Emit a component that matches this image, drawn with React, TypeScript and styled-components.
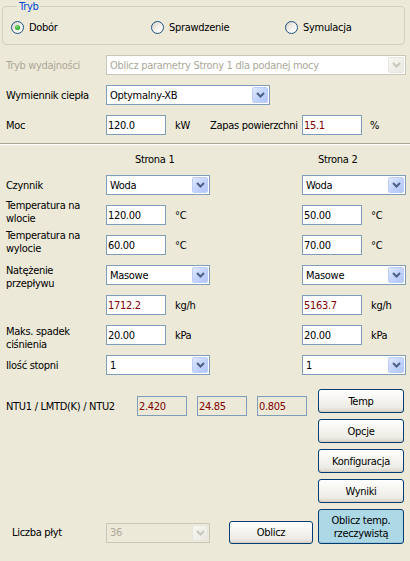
import React from "react";
import styled, { createGlobalStyle } from "styled-components";

const GlobalStyle = createGlobalStyle`
  html, body {
    margin: 0;
    padding: 0;
    background: #ece9d8;
  }
  body {
    font-family: "DejaVu Sans Condensed", "Liberation Sans", Arial, sans-serif;
    font-size: 11px;
    font-weight: normal;
    letter-spacing: -0.3px;
    color: #000;
  }
`;

const Window = styled.div`
  width: 410px;
  height: 561px;
  box-sizing: border-box;
  padding: 0 5px 0 6px;
  background: #ece9d8;
  display: flex;
  flex-direction: column;
  overflow: hidden;
`;

const Group = styled.fieldset`
  margin: 0 0 0 -4px;
  padding: 8px 0 10px 8px;
  border: 1px solid #d0d0bf;
  border-radius: 4px;
  min-width: 0;
`;

const Legend = styled.legend`
  margin-left: 6px;
  padding: 0 2px;
  color: #0046d5;
  line-height: 13px;
`;

const RadioRow = styled.div`
  display: grid;
  grid-template-columns: 140px 134px 1fr;
`;

const RadioLabel = styled.label`
  display: flex;
  align-items: center;
  gap: 5px;
  line-height: 13px;
`;

const RadioDot = styled.span<{ $checked?: boolean }>`
  width: 13px;
  height: 13px;
  box-sizing: border-box;
  border-radius: 50%;
  border: 1px solid #1c5180;
  background: linear-gradient(135deg, #d6d2c6 0%, #f4f3ee 55%, #fff 100%);
  display: flex;
  align-items: center;
  justify-content: center;

  &::after {
    content: "";
    width: 5px;
    height: 5px;
    border-radius: 50%;
    background: ${(p) =>
      p.$checked ? "radial-gradient(circle at 40% 35%, #7ee07e, #21a121 70%)" : "transparent"};
  }
`;

const Row = styled.div<{ $top?: number; $h?: number }>`
  display: flex;
  align-items: center;
  height: ${(p) => p.$h ?? 20}px;
  margin-top: ${(p) => p.$top ?? 10}px;
  flex: none;
`;

const Label = styled.span<{ $w?: number; $pad?: number; $disabled?: boolean }>`
  width: ${(p) => p.$w ?? 100}px;
  padding-left: ${(p) => p.$pad ?? 0}px;
  box-sizing: border-box;
  flex: none;
  white-space: nowrap;
  color: ${(p) => (p.$disabled ? "#aca899" : "#000")};
`;

const MultiLabel = styled(Label)<{ $shift: number }>`
  align-self: flex-start;
  margin-top: ${(p) => p.$shift}px;
  line-height: 13px;
`;

const Cell = styled.div<{ $w?: number }>`
  display: flex;
  align-items: center;
  width: ${(p) => (p.$w ? `${p.$w}px` : "auto")};
  flex: ${(p) => (p.$w ? "none" : "1")};
`;

const Heading = styled.span<{ $indent: number }>`
  padding-left: ${(p) => p.$indent}px;
  line-height: 14px;
`;

const Combo = styled.div<{ $w: number; $disabled?: boolean; $bg?: string }>`
  width: ${(p) => p.$w}px;
  height: 20px;
  box-sizing: border-box;
  flex: none;
  display: flex;
  align-items: center;
  padding: 1px;
  border: 1px solid ${(p) => (p.$disabled ? "#c9c7ba" : "#7f9db9")};
  background: ${(p) => p.$bg ?? "#fff"};
  color: ${(p) => (p.$disabled ? "#aca899" : "#000")};
`;

const ComboText = styled.span`
  flex: 1;
  padding-left: 2px;
  white-space: nowrap;
  overflow: hidden;
`;

const ComboArrow = styled.span<{ $disabled?: boolean }>`
  width: 16px;
  height: 100%;
  box-sizing: border-box;
  border-radius: 2px;
  display: flex;
  align-items: center;
  justify-content: center;
  border: 1px solid ${(p) => (p.$disabled ? "#e8e6dc" : "#bccdf7")};
  background: ${(p) =>
    p.$disabled
      ? "linear-gradient(135deg, #f7f6f2, #ebe9e1)"
      : "linear-gradient(135deg, #e2eafe 0%, #c6d6fc 45%, #b1c6f7 100%)"};
  color: ${(p) => (p.$disabled ? "#c9c7ba" : "#4d6185")};
`;

const TextBox = styled.input<{ $w?: number; $red?: boolean; $flat?: boolean }>`
  width: ${(p) => p.$w ?? 60}px;
  height: 20px;
  box-sizing: border-box;
  flex: none;
  margin: 0;
  padding: 0 0 0 1px;
  border: 1px solid #7f9db9;
  border-radius: 0;
  outline: none;
  font: inherit;
  letter-spacing: inherit;
  background: ${(p) => (p.$flat ? "#ece9d8" : "#fff")};
  color: ${(p) => (p.$red ? "#800000" : "#000")};
`;

const Unit = styled.span<{ $gap?: number; $w?: number }>`
  margin-left: ${(p) => p.$gap ?? 9}px;
  width: ${(p) => (p.$w ? `${p.$w}px` : "auto")};
  flex: none;
  white-space: nowrap;
`;

const Separator = styled.hr`
  margin: 8px -5px 0 -6px;
  height: 0;
  border: 0;
  border-top: 1px solid #aca899;
  border-bottom: 1px solid #fff;
  flex: none;
`;

const Bottom = styled.div`
  display: flex;
  margin-top: 14px;
`;

const LeftPane = styled.div`
  flex: 1;
  display: flex;
  flex-direction: column;
  justify-content: space-between;
`;

const Fields = styled.div`
  display: flex;
  gap: 10px;
`;

const ButtonColumn = styled.div`
  width: 86px;
  margin-right: 1px;
  display: flex;
  flex-direction: column;
  gap: 6px;
`;

const Button = styled.button<{ $h?: number; $w?: number; $accent?: boolean }>`
  width: ${(p) => (p.$w ? `${p.$w}px` : "100%")};
  height: ${(p) => p.$h ?? 24}px;
  flex: none;
  margin: 0;
  padding: 0;
  box-sizing: border-box;
  border: 1px solid #003c74;
  border-radius: 3px;
  font: inherit;
  letter-spacing: inherit;
  line-height: 13px;
  color: #000;
  text-align: center;
  background: ${(p) =>
    p.$accent
      ? "#add8e6"
      : "linear-gradient(#ffffff 0%, #f6f5f1 40%, #ecebe5 80%, #d8d3c8 100%)"};
  box-shadow: inset 0 -1px 0 ${(p) => (p.$accent ? "#9cc4d4" : "#d6d0c5")};
`;

function Chevron() {
  return (
    <svg width="9" height="6" viewBox="0 0 9 6">
      <path d="M1 1 L4.5 4.5 L8 1" fill="none" stroke="currentColor" strokeWidth="2" />
    </svg>
  );
}

function ComboBox({
  value,
  w,
  disabled,
  bg,
}: {
  value: string;
  w: number;
  disabled?: boolean;
  bg?: string;
}) {
  return (
    <Combo $w={w} $disabled={disabled} $bg={bg}>
      <ComboText>{value}</ComboText>
      <ComboArrow $disabled={disabled}>
        <Chevron />
      </ComboArrow>
    </Combo>
  );
}

function Radio({ label, checked }: { label: string; checked?: boolean }) {
  return (
    <RadioLabel>
      <RadioDot $checked={checked} />
      {label}
    </RadioLabel>
  );
}

export default function App() {
  return (
    <Window>
      <GlobalStyle />
      <Group>
        <Legend>Tryb</Legend>
        <RadioRow>
          <Radio label="Dobór" checked />
          <Radio label="Sprawdzenie" />
          <Radio label="Symulacja" />
        </RadioRow>
      </Group>

      <Row>
        <Label $disabled>Tryb wydajności</Label>
        <ComboBox value="Oblicz parametry Strony 1 dla podanej mocy" w={300} disabled />
      </Row>
      <Row>
        <Label>Wymiennik ciepła</Label>
        <ComboBox value="Optymalny-XB" w={164} />
      </Row>
      <Row>
        <Label>Moc</Label>
        <TextBox readOnly value="120.0" />
        <Unit $w={35}>kW</Unit>
        <Label $w={92}>Zapas powierzchni</Label>
        <TextBox readOnly value="15.1" $red />
        <Unit $gap={8}>%</Unit>
      </Row>

      <Separator />

      <Row $top={8} $h={14}>
        <Label />
        <Cell $w={196}>
          <Heading $indent={29}>Strona 1</Heading>
        </Cell>
        <Cell>
          <Heading $indent={16}>Strona 2</Heading>
        </Cell>
      </Row>

      <Row $top={8}>
        <Label>Czynnik</Label>
        <Cell $w={196}>
          <ComboBox value="Woda" w={104} />
        </Cell>
        <Cell>
          <ComboBox value="Woda" w={104} />
        </Cell>
      </Row>
      <Row>
        <MultiLabel $shift={-6}>
          Temperatura na
          <br />
          wlocie
        </MultiLabel>
        <Cell $w={196}>
          <TextBox readOnly value="120.00" />
          <Unit>°C</Unit>
        </Cell>
        <Cell>
          <TextBox readOnly value="50.00" />
          <Unit>°C</Unit>
        </Cell>
      </Row>
      <Row>
        <MultiLabel $shift={-6}>
          Temperatura na
          <br />
          wylocie
        </MultiLabel>
        <Cell $w={196}>
          <TextBox readOnly value="60.00" />
          <Unit>°C</Unit>
        </Cell>
        <Cell>
          <TextBox readOnly value="70.00" />
          <Unit>°C</Unit>
        </Cell>
      </Row>
      <Row>
        <MultiLabel $shift={-1}>
          Natężenie
          <br />
          przepływu
        </MultiLabel>
        <Cell $w={196}>
          <ComboBox value="Masowe" w={104} />
        </Cell>
        <Cell>
          <ComboBox value="Masowe" w={104} />
        </Cell>
      </Row>
      <Row>
        <Label />
        <Cell $w={196}>
          <TextBox readOnly value="1712.2" $red />
          <Unit>kg/h</Unit>
        </Cell>
        <Cell>
          <TextBox readOnly value="5163.7" $red />
          <Unit>kg/h</Unit>
        </Cell>
      </Row>
      <Row>
        <MultiLabel $shift={0}>
          Maks. spadek
          <br />
          ciśnienia
        </MultiLabel>
        <Cell $w={196}>
          <TextBox readOnly value="20.00" />
          <Unit>kPa</Unit>
        </Cell>
        <Cell>
          <TextBox readOnly value="20.00" />
          <Unit>kPa</Unit>
        </Cell>
      </Row>
      <Row>
        <Label>Ilość stopni</Label>
        <Cell $w={196}>
          <ComboBox value="1" w={104} />
        </Cell>
        <Cell>
          <ComboBox value="1" w={104} />
        </Cell>
      </Row>

      <Bottom>
        <LeftPane>
          <Row $top={7}>
            <Label $w={131}>NTU1 / LMTD(K) / NTU2</Label>
            <Fields>
              <TextBox readOnly value="2.420" $w={50} $red $flat />
              <TextBox readOnly value="24.85" $w={50} $red $flat />
              <TextBox readOnly value="0.805" $w={50} $red $flat />
            </Fields>
          </Row>
          <Row $top={0} $h={23}>
            <Label $pad={6}>Liczba płyt</Label>
            <ComboBox value="36" w={104} disabled bg="#ece9d8" />
            <Unit $gap={19}>
              <Button $w={84} $h={23}>
                Oblicz
              </Button>
            </Unit>
          </Row>
        </LeftPane>
        <ButtonColumn>
          <Button>Temp</Button>
          <Button>Opcje</Button>
          <Button>Konfiguracja</Button>
          <Button>Wyniki</Button>
          <Button $h={35} $accent>
            Oblicz temp.
            <br />
            rzeczywistą
          </Button>
        </ButtonColumn>
      </Bottom>
    </Window>
  );
}
